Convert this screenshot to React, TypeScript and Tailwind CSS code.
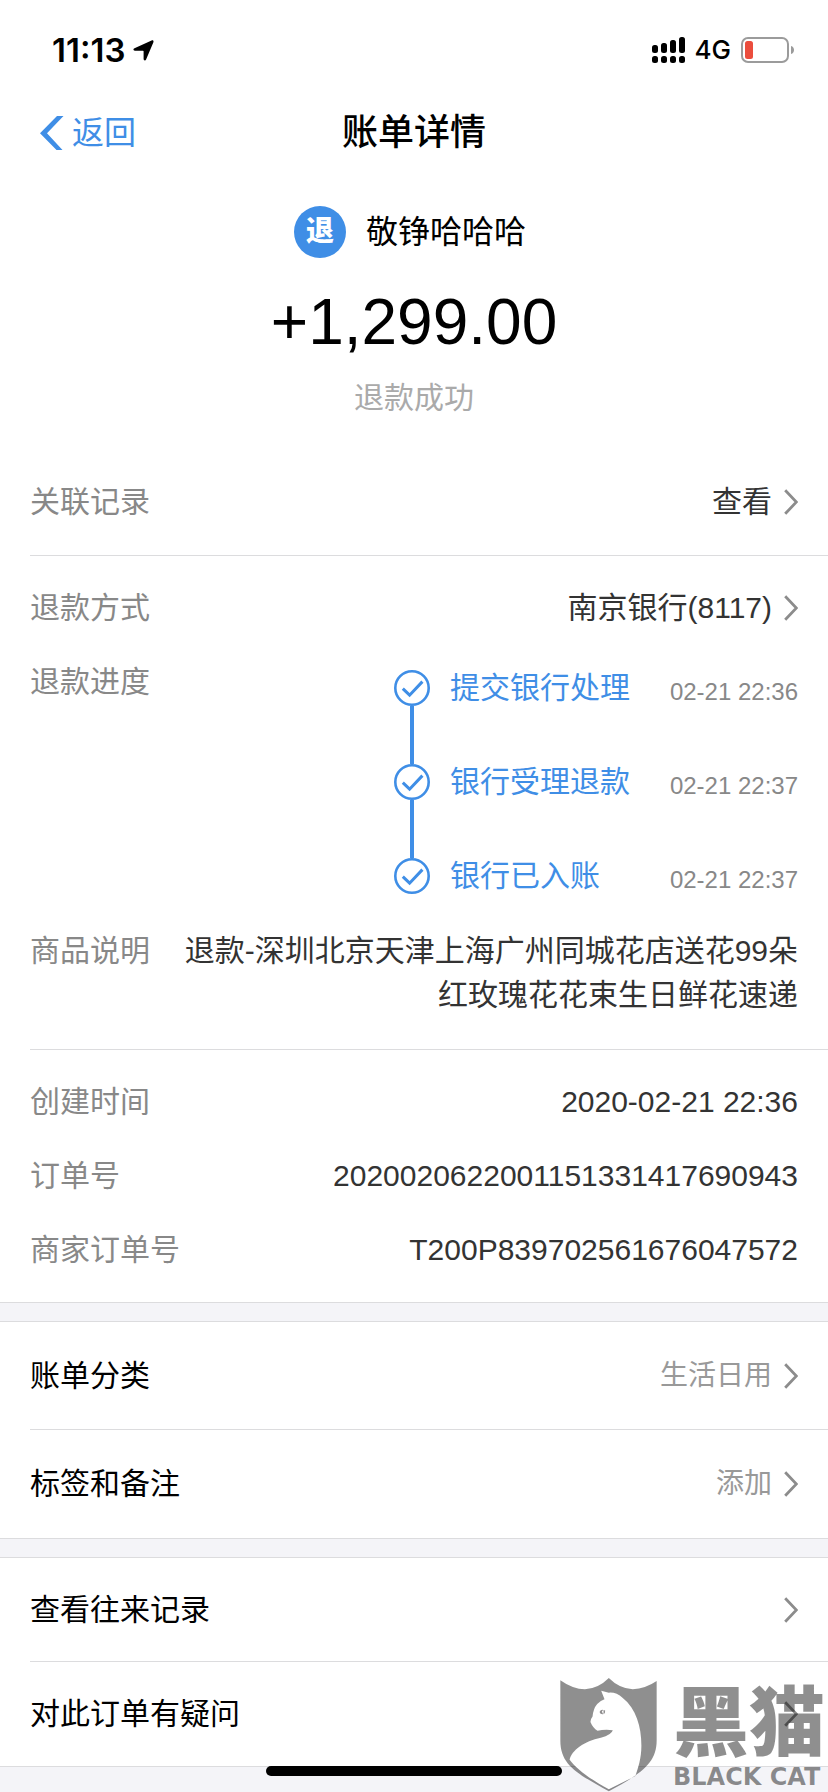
import type { ReactNode } from "react";
import clsx from "clsx";

const STEPS = [
	{ title: "提交银行处理", time: "02-21 22:36" },
	{ title: "银行受理退款", time: "02-21 22:37" },
	{ title: "银行已入账", time: "02-21 22:37" },
];

const ORDER_INFO = [
	{ label: "创建时间", value: "2020-02-21 22:36" },
	{ label: "订单号", value: "2020020622001151331417690943" },
	{ label: "商家订单号", value: "T200P839702561676047572" },
];

const ChevronRight = () => (
	<svg width="14" height="26" viewBox="0 0 14 26" fill="none" className="shrink-0" aria-hidden="true">
		<path d="M1.2 1.2 12.4 13 1.2 24.8" stroke="#8c8c8c" strokeWidth="2.8" />
	</svg>
);

const CheckCircle = () => (
	<svg width="36" height="36" viewBox="0 0 36 36" fill="none" className="shrink-0" aria-hidden="true">
		<circle cx="18" cy="18" r="16.7" stroke="#3f8ee6" strokeWidth="2.6" />
		<path d="M8.8 18.6 15.6 25.2 28.4 11.6" stroke="#3f8ee6" strokeWidth="3" />
	</svg>
);

const StatusBar = () => (
	<div className="flex h-[88px] items-center justify-between pt-3 pr-[34px] pl-[52px] font-['Inter',sans-serif]">
		<div className="flex items-center gap-2">
			<span className="text-[33px] leading-[44px] font-semibold">11:13</span>
			<svg width="21" height="21" viewBox="0 0 21 21" aria-hidden="true">
				<path
					d="M1.5 8.2 18.6.5c1.3-.6 2.3.4 1.8 1.7L13.1 19.6c-.6 1.3-2.5 1.1-2.5-.5V11.3c0-.4-.2-.6-.6-.6H1.9C.2 10.7-.1 8.9 1.5 8.2Z"
					fill="#000"
				/>
			</svg>
		</div>
		<div className="flex items-center gap-[10px]">
			<svg width="33" height="26" viewBox="0 0 33 26" aria-hidden="true">
				<rect x="0" y="8" width="6" height="8" rx="2.5" />
				<rect x="9" y="6" width="6" height="10" rx="2.5" />
				<rect x="18" y="3" width="6" height="13" rx="2.5" />
				<rect x="27" y="0" width="6" height="16" rx="2.5" />
				<rect x="0" y="19" width="6" height="7" rx="2.5" />
				<rect x="9" y="19" width="6" height="7" rx="2.5" />
				<rect x="18" y="19" width="6" height="7" rx="2.5" />
				<rect x="27" y="19" width="6" height="7" rx="2.5" />
			</svg>
			<span className="text-[26px] leading-[44px] font-medium">4G</span>
			<svg width="53" height="26" viewBox="0 0 53 26" aria-hidden="true">
				<rect x="1" y="1" width="46" height="24" rx="6" fill="none" stroke="#9b9b9b" strokeWidth="2" />
				<rect x="4" y="4" width="8" height="18" rx="2.5" fill="#eb4d3d" />
				<path d="M50 9c4 1 4 7 0 8Z" fill="#9b9b9b" />
			</svg>
		</div>
	</div>
);

const NavBar = () => (
	<header className="grid h-[90px] grid-cols-[1fr_auto_1fr] items-center px-10">
		<button type="button" className="flex items-center gap-2 justify-self-start text-[32px] leading-[44px] text-[#3f8ee6]">
			<svg width="24" height="34" viewBox="0 0 24 34" aria-hidden="true">
				<path d="M17 0h6.5L7 17.2 22.5 34H16.5L0 17.2Z" fill="#3f8ee6" />
			</svg>
			返回
		</button>
		<h1 className="text-[36px] leading-[44px] font-medium">账单详情</h1>
	</header>
);

const Row = ({ label, children }: { label: string; children: ReactNode }) => (
	<div className="flex items-start justify-between gap-7 pr-[30px]">
		<span className="shrink-0 text-[#888]">{label}</span>
		{children}
	</div>
);

const LinkButton = ({ children, label }: { children: ReactNode; label: string }) => (
	<button type="button" aria-label={label} className="flex items-center gap-3 text-[#333]">
		{children}
		<ChevronRight />
	</button>
);

interface MenuItemProps {
	label: string;
	value?: string;
	tall?: boolean;
	divider?: boolean;
}

const MenuItem = ({ label, value, tall, divider }: MenuItemProps) => (
	<button
		type="button"
		className={clsx(
			"flex w-full items-center justify-between border-[#dcdcde] pr-[30px]",
			tall ? "h-[108px]" : "h-[104px]",
			divider && "border-b",
		)}
	>
		<span>{label}</span>
		<span className="flex items-center gap-3 text-[28px] text-[#999]">
			{value}
			<ChevronRight />
		</span>
	</button>
);

const Band = () => <div className="h-5 border-y border-[#dcdcde] bg-[#f4f4f8]" />;

const BlackCatMark = () => (
	<div className="pointer-events-none absolute right-[3px] bottom-0 flex items-end gap-4">
		<svg width="97" height="115" viewBox="57 80 292 344" aria-hidden="true">
			<path
				d="M181 120 204 126Q226 124 246 142C286 174 302 228 302 285 302 325 292 352 284 377L204 417C150 388 105 355 86 328 92 300 130 272 180 262Q212 253 216 239 190 236 170 241 156 232 149 215 148 207 155 198 157 174 169 160 180 150 191 146Z"
				fill="#fff"
			/>
			<path
				fillRule="evenodd"
				d="M58 89Q96 116 132 116 172 114 204 82 236 114 276 116 314 114 348 91V270C348 340 300 370 204 423 110 370 58 345 58 270ZM181 120 191 146Q180 150 169 160 157 174 155 198 148 207 149 215 156 232 170 241 190 236 216 239 212 253 180 262C130 272 92 300 86 328 105 355 150 388 204 417L284 377C292 352 302 325 302 285 302 228 286 174 246 142Q226 124 204 126Z"
				fill="#000"
				fillOpacity="0.44"
			/>
			<path d="M176 184Q180 176 187 178L183 183 187 191Q178 192 176 184ZM188 178 193 180Q194 187 188 191Z" fill="#918f90" />
		</svg>
		<div className="flex flex-col text-black/44">
			<span className="text-[76px] leading-[76px] font-black">黑猫</span>
			<span className="font-['DejaVu_Sans',sans-serif] text-[24px] leading-[30px] font-bold whitespace-nowrap">BLACK CAT</span>
		</div>
	</div>
);

export default function App() {
	return (
		<div
			lang="zh-CN"
			className="relative flex min-h-screen flex-col bg-white font-['Liberation_Sans','Noto_Sans_CJK_SC',sans-serif] text-[30px] leading-[44px] text-black"
		>
			<StatusBar />
			<NavBar />

			<section className="flex flex-col items-center pt-7 pb-7">
				<div className="flex items-center gap-5 pr-2">
					<span className="flex size-[52px] items-center justify-center rounded-full bg-[#3f8ee6] text-[28px] font-black text-white">
						退
					</span>
					<span className="text-[32px]">敬铮哈哈哈</span>
				</div>
				<p className="mt-6 text-[64px] leading-[80px]">+1,299.00</p>
				<p className="mt-[14px] text-[#aaa]">退款成功</p>
			</section>

			<main className="flex flex-1 flex-col">
				<section className="ml-[30px] border-b border-[#dcdcde] pt-8 pb-[31px]">
					<Row label="关联记录">
						<LinkButton label="查看关联记录">查看</LinkButton>
					</Row>
				</section>

				<section className="ml-[30px] flex flex-col gap-[30px] border-b border-[#dcdcde] pt-[30px] pb-8">
					<Row label="退款方式">
						<LinkButton label="南京银行(8117)">南京银行(8117)</LinkButton>
					</Row>
					<Row label="退款进度">
						<ol className="pt-[10px] pb-[5px]">
							{STEPS.map((step, i) => (
								<li key={step.title} className="flex gap-5">
									<div className="flex flex-col items-center">
										<CheckCircle />
										{i < STEPS.length - 1 && <span className="h-[58px] w-1 bg-[#3f8ee6]" />}
									</div>
									<div className="flex h-9 flex-1 items-center justify-between gap-10 leading-9">
										<span className="text-[#3f8ee6]">{step.title}</span>
										<time className="pt-2 text-[24px] text-[#888]">{step.time}</time>
									</div>
								</li>
							))}
						</ol>
					</Row>
					<Row label="商品说明">
						<p className="text-right text-[#333]">退款-深圳北京天津上海广州同城花店送花99朵红玫瑰花花束生日鲜花速递</p>
					</Row>
				</section>

				<section className="ml-[30px] flex flex-col gap-[30px] py-[30px]">
					{ORDER_INFO.map((item) => (
						<Row key={item.label} label={item.label}>
							<span className="text-[#333]">{item.value}</span>
						</Row>
					))}
				</section>

				<Band />
				<section className="pl-[30px]">
					<MenuItem label="账单分类" value="生活日用" tall divider />
					<MenuItem label="标签和备注" value="添加" tall />
				</section>
				<Band />
				<section className="pl-[30px]">
					<MenuItem label="查看往来记录" divider />
					<MenuItem label="对此订单有疑问" />
				</section>
				<div className="min-h-6 flex-1 border-t border-[#dcdcde] bg-[#f4f4f8]" />
			</main>

			<div className="absolute bottom-4 left-1/2 h-[10px] w-[296px] -translate-x-1/2 rounded-full bg-black" />
			<BlackCatMark />
		</div>
	);
}
